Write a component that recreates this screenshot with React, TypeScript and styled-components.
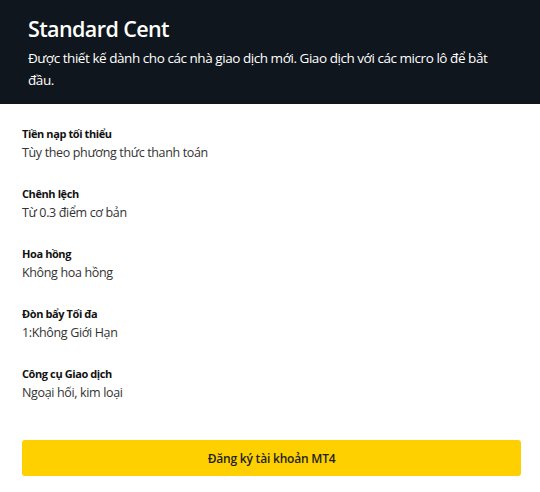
import React from 'react';
import styled, { createGlobalStyle } from 'styled-components';

const GlobalStyle = createGlobalStyle`
    body {
        margin: 0;
        background: #ffffff;
        font-family: "Open Sans", "Noto Sans", sans-serif;
    }
`;

const Card = styled.div`
    width: 540px;
    display: flex;
    flex-direction: column;
`;

const Header = styled.div`
    background-color: #10161d;
    color: #ffffff;
    padding: 14px 40px 15px 28px;
    height: 104px;
    box-sizing: border-box;
`;

const Title = styled.h2`
    margin: 0 0 3px;
    font-size: 21.5px;
    font-weight: 600;
    letter-spacing: -0.6px;
    line-height: 30px;
`;

const Description = styled.p`
    margin: 0;
    font-size: 13.5px;
    letter-spacing: -0.45px;
    line-height: 22px;
`;

const Body = styled.div`
    display: flex;
    flex-direction: column;
    padding: 22px 19px 0 22px;
`;

const SpecList = styled.div`
    display: flex;
    flex-direction: column;
    gap: 24px;
`;

const Spec = styled.div`
    display: flex;
    flex-direction: column;
    gap: 3px;
`;

const Label = styled.div`
    font-size: 11px;
    font-weight: 700;
    letter-spacing: -0.4px;
    color: #111;
    line-height: 15px;
`;

const Value = styled.div`
    font-size: 12.5px;
    letter-spacing: -0.35px;
    color: #333;
    line-height: 18px;
`;

const SignupButton = styled.button`
    margin-top: 38px;
    height: 36px;
    border: none;
    border-radius: 3px;
    background-color: #ffd000;
    color: #222;
    font-family: inherit;
    font-size: 12px;
    font-weight: 600;
    letter-spacing: -0.2px;
    cursor: pointer;
`;

const specs = [
    { label: 'Tiền nạp tối thiểu', value: 'Tùy theo phương thức thanh toán' },
    { label: 'Chênh lệch', value: 'Từ 0.3 điểm cơ bản' },
    { label: 'Hoa hồng', value: 'Không hoa hồng' },
    { label: 'Đòn bẩy Tối đa', value: '1:Không Giới Hạn' },
    { label: 'Công cụ Giao dịch', value: 'Ngoại hối, kim loại' },
];

const App: React.FC = () => {
    return (
        <>
            <GlobalStyle />
            <Card>
                <Header>
                    <Title>Standard Cent</Title>
                    <Description>
                        Được thiết kế dành cho các nhà giao dịch mới. Giao dịch với các micro lô để bắt đầu.
                    </Description>
                </Header>
                <Body>
                    <SpecList>
                        {specs.map((s) => (
                            <Spec key={s.label}>
                                <Label>{s.label}</Label>
                                <Value>{s.value}</Value>
                            </Spec>
                        ))}
                    </SpecList>
                    <SignupButton>Đăng ký tài khoản MT4</SignupButton>
                </Body>
            </Card>
        </>
    );
};

export default App;
